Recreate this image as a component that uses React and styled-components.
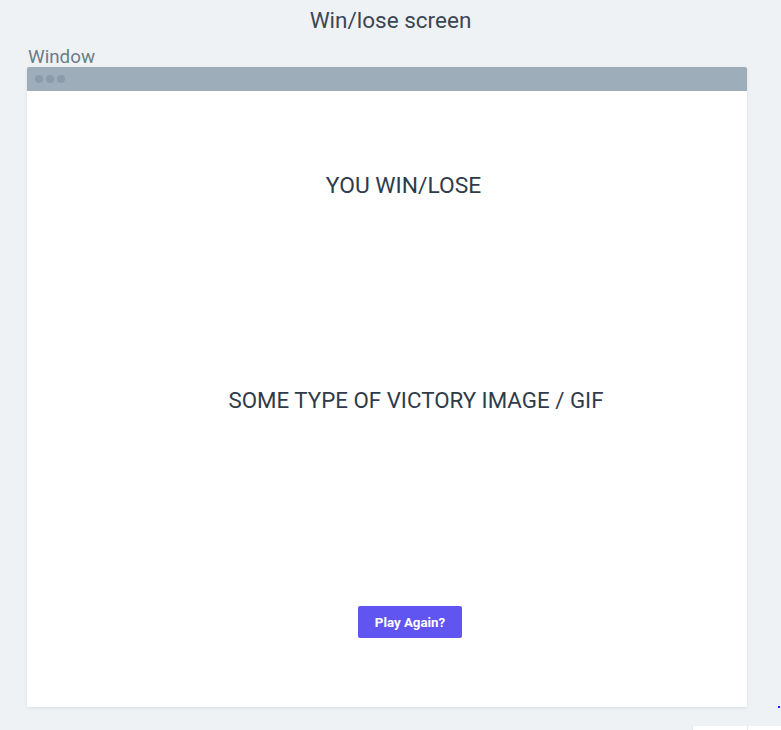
import React from "react";
import styled, { createGlobalStyle } from "styled-components";

const GlobalStyle = createGlobalStyle`
  html, body {
    margin: 0;
    padding: 0;
    background: #eff2f5;
    font-family: Roboto, "Liberation Sans", sans-serif;
  }
`;

const Page = styled.div`
  position: relative;
  width: 781px;
  height: 730px;
  overflow: hidden;
  background: #eff2f5;
`;

const Title = styled.h1`
  margin: 0;
  padding-top: 6px;
  height: 44px;
  box-sizing: border-box;
  text-align: center;
  font-size: 22.5px;
  line-height: 28px;
  font-weight: 400;
  color: #3b4654;
`;

const Frame = styled.section`
  margin-left: 27px;
  width: 720px;
`;

const FrameLabel = styled.div`
  font-size: 18.8px;
  line-height: 20px;
  height: 23px;
  padding: 3px 0 0 1px;
  box-sizing: border-box;
  color: #6d7b8b;
`;

const Window = styled.div`
  background: #ffffff;
  height: 640px;
  display: flex;
  flex-direction: column;
  box-shadow: 0 1px 3px rgba(60, 80, 100, 0.12);
  border-radius: 2px 2px 0 0;
  overflow: hidden;
`;

const TitleBar = styled.div`
  height: 24px;
  background: #9eadba;
  display: flex;
  align-items: center;
  gap: 3px;
  padding-left: 8px;
  padding-bottom: 1px;
  box-sizing: border-box;
`;

const Dot = styled.span`
  width: 8px;
  height: 8px;
  border-radius: 50%;
  background: #8c9ba9;
`;

const Content = styled.div`
  flex: 1;
  display: flex;
  flex-direction: column;
  align-items: center;
`;

const Heading = styled.div`
  font-size: ${(p) => p.$size}px;
  color: #2f3b4a;
  margin-top: ${(p) => p.$top}px;
  margin-left: ${(p) => p.$shift}px;
  line-height: 28px;
  white-space: nowrap;
`;

const PlayButton = styled.button`
  margin-top: ${(p) => p.$top}px;
  margin-left: ${(p) => p.$shift}px;
  width: 104px;
  height: 32px;
  border: none;
  border-radius: 2px;
  background: #6155f1;
  color: #ffffff;
  font-family: Roboto, "Liberation Sans", sans-serif;
  font-weight: 700;
  font-size: 13.3px;
  cursor: pointer;
`;

const Corner = styled.div`
  position: absolute;
  left: 692px;
  top: 726px;
  width: 89px;
  height: 4px;
  background: #ffffff;
  border-left: 1px solid #e4e8ec;
  display: flex;
`;

const CornerSplit = styled.span`
  width: 54px;
  border-right: 1px solid #e4e8ec;
`;

const BlueMark = styled.span`
  position: absolute;
  left: 778px;
  top: 706px;
  width: 2px;
  height: 2px;
  background: #1a1aff;
`;

export default function App() {
  return (
    <Page>
      <GlobalStyle />
      <Title>Win/lose screen</Title>
      <Frame>
        <FrameLabel>Window</FrameLabel>
        <Window>
          <TitleBar>
            <Dot />
            <Dot />
            <Dot />
          </TitleBar>
          <Content>
            <Heading $size={22.8} $top={81} $shift={33}>
              YOU WIN/LOSE
            </Heading>
            <Heading $size={22.3} $top={186} $shift={58}>
              SOME TYPE OF VICTORY IMAGE / GIF
            </Heading>
            <PlayButton $top={192} $shift={46}>
              Play Again?
            </PlayButton>
          </Content>
        </Window>
      </Frame>
      <BlueMark />
      <Corner>
        <CornerSplit />
      </Corner>
    </Page>
  );
}
